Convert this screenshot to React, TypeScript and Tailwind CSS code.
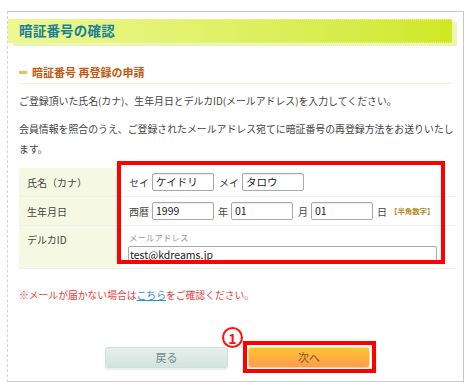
import React from "react";

const font = { fontFamily: '"Noto Sans CJK JP", "Noto Sans", sans-serif' };

function Field({ value, w }: { value: string; w: string }) {
  return (
    <div
      className={`${w} h-[18px] border border-[#a9a9a9] rounded-[2px] bg-white flex items-center pl-[3px] text-[10.5px] text-[#222] shadow-[inset_0_1px_1px_rgba(0,0,0,0.08)]`}
    >
      {value}
    </div>
  );
}

export default function App() {
  return (
    <div
      className="relative w-[472px] h-[382px] bg-white pt-[11px] pl-[7px] overflow-hidden"
      style={font}
    >
      <div className="w-[457px] h-[371px] border border-[#c8c8c8] [border-left-style:dashed] [border-left-color:#d4d4d4] flex flex-col">
        {/* header */}
        <div className="mt-[7px] w-[444px] h-[24px] bg-gradient-to-r from-[#eef88e] to-[#cfe820] border-y border-dotted border-[#e9f6a8] shadow-[5px_3px_0_#ebf6b6] flex items-center pl-[11px]">
          <span className="text-[13.5px] font-bold text-[#17809c] leading-none tracking-[0.2px]">
            暗証番号の確認
          </span>
        </div>

        {/* section heading */}
        <div className="mt-[21px] mx-[11px] h-[20px] border-b border-[#f7ecd6] flex items-center pb-[2px]">
          <span className="w-[8px] h-[3px] bg-[#f9b65a] mr-[5px]" />
          <span className="text-[11px] font-bold text-[#c25a12] leading-none">
            暗証番号 再登録の申請
          </span>
        </div>

        <div className="mx-[11px] text-[9.9px] text-[#444] leading-[20px]">
          <p className="mt-[7px] whitespace-nowrap">
            ご登録頂いた氏名(カナ)、生年月日とデルカID(メールアドレス)を入力してください。
          </p>
          <p className="mt-[8px] whitespace-nowrap">
            会員情報を照合のうえ、ご登録されたメールアドレス宛てに暗証番号の再登録方法をお送りいたし
            <br />
            ます。
          </p>
        </div>

        {/* table */}
        <div className="mt-[9px] mx-[11px] w-[436px] flex flex-col text-[10px] text-[#444]">
          <div className="flex h-[29px] border-b border-[#efefef]">
            <div className="w-[101px] bg-[#f5f8e2] flex items-center pl-[8px]">氏名（カナ）</div>
            <div className="flex-1 flex items-center pl-[9px]">
              <span className="mr-[3px]">セイ</span>
              <Field value="ケイドリ" w="w-[62px]" />
              <span className="ml-[5px] mr-[3px]">メイ</span>
              <Field value="タロウ" w="w-[62px]" />
            </div>
          </div>
          <div className="flex h-[29px] border-b border-[#efefef]">
            <div className="w-[101px] bg-[#f5f8e2] flex items-center pl-[8px]">生年月日</div>
            <div className="flex-1 flex items-center pl-[9px]">
              <span className="mr-[3px]">西暦</span>
              <Field value="1999" w="w-[62px]" />
              <span className="ml-[4px] mr-[3px]">年</span>
              <Field value="01" w="w-[62px]" />
              <span className="ml-[5px] mr-[3px]">月</span>
              <Field value="01" w="w-[62px]" />
              <span className="ml-[4px]">日</span>
              <span className="ml-[3px] text-[7.4px] font-semibold text-[#b48d1c]">【半角数字】</span>
            </div>
          </div>
          <div className="flex h-[43px] border-b border-[#efefef]">
            <div className="w-[101px] bg-[#f5f8e2] pl-[8px] pt-[6px]">デルカID</div>
            <div className="flex-1 flex flex-col pl-[8px] pt-[4px]">
              <span className="text-[8.5px] text-[#999] leading-[14px] pl-[1px]">メールアドレス</span>
              <div className="mt-[2px] w-[309px] h-[18px] border border-[#a9a9a9] rounded-[2px] flex items-center pl-[1px] text-[10.5px] text-[#222]">
                test@kdreams.jp
              </div>
            </div>
          </div>
        </div>

        {/* note */}
        <p className="mt-[16px] mx-[11px] text-[9.8px] leading-[20px] text-[#e8403c]">
          ※メールが届かない場合は
          <span className="text-[#2f8fd0] underline">こちら</span>
          をご確認ください。
        </p>

        {/* buttons */}
        <div className="mt-[42px] flex pl-[97px] gap-[20px]">
          <div className="w-[123px] h-[21px] rounded-[3px] border border-[#cfdfdb] bg-gradient-to-b from-[#e5efec] to-[#d3e4df] shadow-[0_2px_1px_#eaf0ee] flex items-center justify-center text-[11px] text-[#6f8f8a]">
            戻る
          </div>
          <div className="w-[122px] h-[21px] rounded-[3px] border border-[#ffd98a] bg-gradient-to-b from-[#ffc42c] to-[#ff9a4e] flex items-center justify-center text-[11px] text-[#7b5426]">
            次へ
          </div>
        </div>
      </div>

      {/* annotations */}
      <div className="absolute left-[117px] top-[161px] w-[328px] h-[103px] border-4 border-[#ff0000]" />
      <div className="absolute left-[243px] top-[341px] w-[133px] h-[32px] border-4 border-[#ff0000]" />
      <div className="absolute left-[222px] top-[327px] w-[21px] h-[21px] rounded-full border-2 border-[#ff1010] flex items-center justify-center text-[#ff1010] text-[14px] font-bold leading-none bg-white">
        1
      </div>
    </div>
  );
}
